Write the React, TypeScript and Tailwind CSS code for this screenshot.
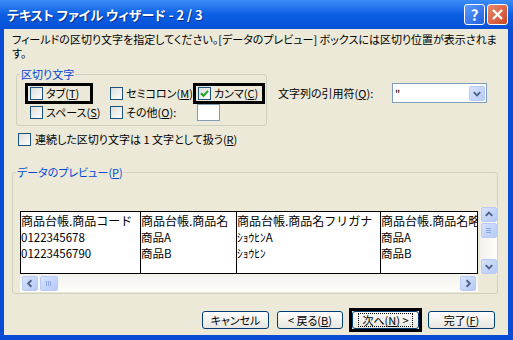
import React from "react";

function Check({ checked = false }: { checked?: boolean }) {
  return (
    <span className="flex h-[13px] w-[13px] shrink-0 items-center justify-center border border-[#1C5180] bg-gradient-to-br from-[#DCDCD7] to-white">
      {checked && (
        <svg width="9" height="9" viewBox="0 0 9 9">
          <path d="M1 4.2 L3.5 6.8 L8 1.8" fill="none" stroke="#21A121" strokeWidth="2" />
        </svg>
      )}
    </span>
  );
}

function Arrow({ dir }: { dir: "up" | "down" | "left" | "right" }) {
  const paths = {
    up: "M4 9 L7.5 5.5 L11 9",
    down: "M4 6 L7.5 9.5 L11 6",
    left: "M9 4 L5.5 7.5 L9 11",
    right: "M6 4 L9.5 7.5 L6 11",
  };
  return (
    <span className="flex h-[15px] w-[16px] shrink-0 items-center justify-center rounded-[2px] border border-[#B8CBF5] bg-gradient-to-br from-[#D7E3FD] to-[#B6CAF6]">
      <svg width="15" height="15" viewBox="0 0 15 15">
        <path d={paths[dir]} fill="none" stroke="#4D6185" strokeWidth="2" />
      </svg>
    </span>
  );
}

function Button({ children, w }: { children: React.ReactNode; w: string }) {
  return (
    <div
      className={`flex h-[18px] ${w} items-center justify-center rounded-[3px] border border-[#003C74] bg-gradient-to-b from-white to-[#E6E5DE] text-[11px] leading-none`}
    >
      {children}
    </div>
  );
}

const cols = [
  { w: "w-[120px]", rows: ["商品台帳.商品コード", "0122345678", "01223456790"] },
  { w: "w-[96px]", rows: ["商品台帳.商品名", "商品A", "商品B"] },
  { w: "w-[144px]", rows: ["商品台帳.商品名フリガナ", "ｼｮｳﾋﾝA", "ｼｮｳﾋﾝ"] },
  { w: "w-[97px]", rows: ["商品台帳.商品名略称", "商品A", "商品B"] },
];

export default function App() {
  return (
    <div className="flex h-[340px] w-[513px] flex-col overflow-hidden whitespace-nowrap font-['Noto_Sans_CJK_JP',sans-serif] text-black [font-feature-settings:'palt']">
      {/* title bar */}
      <div className="flex h-[29px] shrink-0 items-center bg-gradient-to-b from-[#3A8CF8] via-[#0B5FE3] to-[#0850D6] pl-[7px] pr-[5px]">
        <span className="text-[13px] font-bold text-white [text-shadow:1px_1px_0_#0A2F8C]">
          テキスト ファイル ウィザード - 2 / 3
        </span>
        <div className="ml-auto flex gap-[2px]">
          <div className="flex h-[21px] w-[21px] items-center justify-center rounded-[3px] border border-white bg-gradient-to-br from-[#5C9BFC] to-[#1E5FE0] text-[15px] font-bold leading-none text-white">
            ?
          </div>
          <div className="flex h-[21px] w-[21px] items-center justify-center rounded-[3px] border border-white bg-gradient-to-br from-[#E88A6D] to-[#C94520]">
            <svg width="13" height="13" viewBox="0 0 13 13">
              <path d="M2 2 L11 11 M11 2 L2 11" stroke="white" strokeWidth="2.4" />
            </svg>
          </div>
        </div>
      </div>

      {/* body */}
      <div className="flex flex-1 flex-col border-b-[5px] border-l-[4px] border-r-[5px] border-[#0A4BD6] bg-[#ECE9D8] text-[11px]">
        <div className="ml-[8px] mt-[3px] flex flex-col leading-[14px]">
          <span>
            フィールドの区切り文字を指定してください。[データのプレビュー] ボックスには区切り位置が表示されま
          </span>
          <span>す。</span>
        </div>

        <div className="ml-[12px] mt-[7px] flex">
          <fieldset className="w-[251px] rounded-[3px] border border-[#D0D0BF] pb-[4px] pt-[2px]">
            <legend className="ml-[3px] px-[1px] leading-[14px] text-[#0046D5]">区切り文字</legend>
            <div className="ml-[8px] flex h-[21px] items-center">
              <div className="flex h-[21px] w-[68px] items-center gap-[3px] border-[3px] border-black pl-[2px]">
                <Check />
                <span>
                  タブ(<u>T</u>)
                </span>
              </div>
              <div className="ml-[17px] flex w-[83px] items-center gap-[3px]">
                <Check />
                <span>
                  セミコロン(<u>M</u>)
                </span>
              </div>
              <div className="flex h-[21px] w-[72px] items-center gap-[3px] border-[3px] border-black pl-[2px]">
                <Check checked />
                <span>
                  カンマ(<u>C</u>)
                </span>
              </div>
            </div>
            <div className="ml-[13px] flex h-[17px] items-center">
              <div className="flex w-[80px] items-center gap-[3px]">
                <Check />
                <span>
                  スペース(<u>S</u>)
                </span>
              </div>
              <div className="flex w-[87px] items-center gap-[3px]">
                <Check />
                <span>
                  その他(<u>O</u>):
                </span>
              </div>
              <div className="h-[17px] w-[23px] border border-[#7F9DB9] bg-white" />
            </div>
          </fieldset>

          <div className="ml-[11px] mt-[16px] flex h-[20px] items-center">
            <span className="w-[114px]">
              文字列の引用符(<u>Q</u>):
            </span>
            <div className="flex h-[20px] w-[95px] items-center border border-[#7F9DB9] bg-white">
              <span className="ml-[2px] flex-1 leading-none">"</span>
              <span className="mr-[1px]">
                <Arrow dir="down" />
              </span>
            </div>
          </div>
        </div>

        <div className="ml-[14px] mt-[7px] flex h-[13px] items-center gap-[4px]">
          <Check />
          <span>
            連続した区切り文字は 1 文字として扱う(<u>R</u>)
          </span>
        </div>

        <fieldset className="ml-[8px] mt-[19px] w-[486px] rounded-[3px] border border-[#D0D0BF] pb-[1px] pt-[28px]">
          <legend className="ml-[3px] px-[1px] leading-[14px] text-[#0046D5]">
            データのプレビュー(<u>P</u>)
          </legend>
          <div className="ml-[7px] flex">
            <div className="flex flex-col">
              <div className="mt-[4px] flex h-[63px] w-[458px] border border-black bg-white">
                {cols.map((c, i) => (
                  <div
                    key={i}
                    className={`${c.w} shrink-0 overflow-hidden pt-[1px] leading-[16px] [font-feature-settings:normal] ${i < cols.length - 1 ? "border-r border-black" : ""}`}
                  >
                    {c.rows.map((r, j) => (
                      <div key={j} className={j === 0 ? "text-[12px]" : "text-[11.5px]"}>
                        {r}
                      </div>
                    ))}
                  </div>
                ))}
              </div>
              <div className="flex h-[18px] w-[458px] items-center bg-gradient-to-b from-[#F3F1EC] to-[#FEFEFB] px-[2px]">
                <Arrow dir="left" />
                <span className="ml-[2px] flex h-[15px] w-[18px] items-center justify-center rounded-[2px] border border-[#B8CBF5] bg-gradient-to-br from-[#D7E3FD] to-[#B6CAF6]">
                  <svg width="8" height="7" viewBox="0 0 8 7">
                    <path d="M1.5 1 V6 M3.5 1 V6 M5.5 1 V6" stroke="#8DA7E8" strokeWidth="1" />
                  </svg>
                </span>
                <span className="ml-auto">
                  <Arrow dir="right" />
                </span>
              </div>
            </div>
            <div className="ml-[2px] flex h-[67px] w-[17px] flex-col items-center bg-gradient-to-r from-[#F3F1EC] to-[#FEFEFB]">
              <Arrow dir="up" />
              <span className="mt-[1px] flex h-[15px] w-[16px] items-center justify-center rounded-[2px] border border-[#B8CBF5] bg-gradient-to-br from-[#D7E3FD] to-[#B6CAF6]">
                <svg width="7" height="8" viewBox="0 0 7 8">
                  <path d="M1 1.5 H6 M1 3.5 H6 M1 5.5 H6" stroke="#8DA7E8" strokeWidth="1" />
                </svg>
              </span>
              <span className="mt-auto">
                <Arrow dir="down" />
              </span>
            </div>
          </div>
        </fieldset>

        <div className="mr-[13px] mt-[14px] flex items-center justify-end">
          <Button w="w-[67px]">キャンセル</Button>
          <div className="ml-[8px]">
            <Button w="w-[66px]">
              &lt; 戻る(<u>B</u>)
            </Button>
          </div>
          <div className="ml-[6px] border-[3px] border-black">
            <Button w="w-[67px]">
              <span className="border border-dotted border-black px-[3px] leading-[12px]">
                次へ(<u>N</u>) &gt;
              </span>
            </Button>
          </div>
          <div className="ml-[6px]">
            <Button w="w-[67px]">
              完了(<u>F</u>)
            </Button>
          </div>
        </div>
      </div>
    </div>
  );
}
